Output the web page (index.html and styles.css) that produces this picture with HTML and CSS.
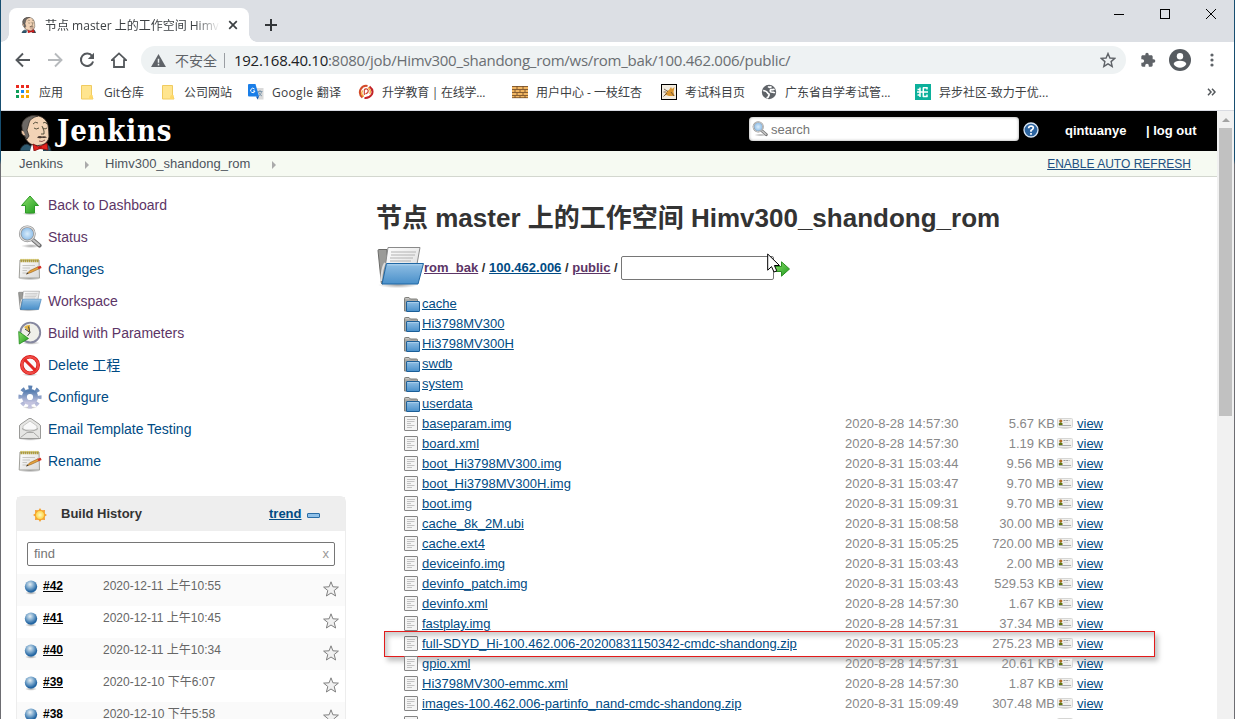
FILE: index.html
```html
<!DOCTYPE html>
<html lang="zh-CN">
<head>
<meta charset="utf-8">
<title>节点 master 上的工作空间 Himv300_shandong_rom</title>
<link rel="stylesheet" href="styles.css">
</head>
<body>
<svg class="defs" aria-hidden="true">
  <defs>
    <linearGradient id="gBlue" x1="0" y1="0" x2="0" y2="1"><stop offset="0" stop-color="#90bfe4"/><stop offset="1" stop-color="#4a90ca"/></linearGradient>
    <linearGradient id="gGreen" x1="0" y1="0" x2="1" y2="1"><stop offset="0" stop-color="#8ee06c"/><stop offset="1" stop-color="#1c9a1c"/></linearGradient>
    <linearGradient id="gPaper" x1="0" y1="0" x2="1" y2="1"><stop offset="0" stop-color="#fff"/><stop offset="1" stop-color="#d9d9d9"/></linearGradient>
    <linearGradient id="gGear" x1="0" y1="0" x2="0" y2="1"><stop offset="0" stop-color="#5a80b2"/><stop offset="1" stop-color="#c3c3df"/></linearGradient>
    <radialGradient id="gBall" cx=".42" cy=".32" r=".7"><stop offset="0" stop-color="#e4edf2"/><stop offset=".45" stop-color="#7aa7cc"/><stop offset=".85" stop-color="#1f62a0"/><stop offset="1" stop-color="#3d79ad"/></radialGradient>
    <radialGradient id="gLens"><stop offset="0" stop-color="#d9ecfb"/><stop offset="1" stop-color="#85b8e6"/></radialGradient>
    <radialGradient id="gSun"><stop offset="0" stop-color="#fffac0"/><stop offset="1" stop-color="#fbd13c"/></radialGradient>
    <radialGradient id="gShade"><stop offset="0" stop-color="#000" stop-opacity=".35"/><stop offset="1" stop-color="#000" stop-opacity="0"/></radialGradient>
    <symbol id="folder" viewBox="0 0 16 16"><path d="M.5 14V1.5Q.5.5 1.5.5H5L6.5 2H12.5Q13.5 2 13.5 3V14Z" fill="#a9a9a5" stroke="#80807c"/><path d="M1.5 1.7H5" stroke="#ccc"/><rect x="2.5" y="4.5" width="13" height="10" rx=".5" fill="url(#gBlue)" stroke="#1c5f98"/><path d="M3.5 5.5H14.5" fill="none" stroke="#a9cdea"/></symbol>
    <symbol id="file" viewBox="0 0 14 15"><rect x=".5" y=".5" width="13" height="14" rx=".5" fill="#f4f4f4" stroke="#848484"/><path d="M3 3.5H11M3 5.5H10.5M3 7.5H7M3 9.5H10.5M3 11.5H8" stroke="#c2c2c2"/></symbol>
    <symbol id="card" viewBox="0 0 16 12"><ellipse cx="8" cy="10.8" rx="7" ry="1.2" fill="url(#gShade)"/><rect x=".5" y="1.5" width="15" height="9" rx="1" fill="#f1f1ef" stroke="#d6d6d4"/><circle cx="3.8" cy="4" r="1.6" fill="#b06a25"/><path d="M1.8 8V6.5L3.5 5.2 5.5 6.3V8Z" fill="#5f7411"/><path d="M6.5 3.5H12.5" stroke="#999" stroke-dasharray="2 .7"/><path d="M6.5 5.5H11" stroke="#ddd"/><path d="M2 8.5H14" stroke="#aaa"/></symbol>
    <symbol id="ball" viewBox="0 0 16 16"><ellipse cx="8" cy="14" rx="6" ry="1.8" fill="url(#gShade)"/><circle cx="8" cy="7.6" r="6.2" fill="url(#gBall)"/></symbol>
    <symbol id="star" viewBox="0 0 16 16"><path d="M8 .8 9.9 5.8 15.4 6.1 11.2 9.5 12.6 15 8 12 3.4 15 4.8 9.5 .6 6.1 6.1 5.8Z" fill="#f1f1f1" stroke="#808080"/></symbol>
    <symbol id="note" viewBox="0 0 24 24"><ellipse cx="12" cy="21.5" rx="11" ry="2" fill="url(#gShade)"/><path d="M2 3H21L21.5 21H1.2Z" fill="url(#gPaper)" stroke="#a0a09b"/><path d="M2.5 4H21" stroke="#a8952e" stroke-width="2.6" stroke-dasharray="1.4 .6"/><path d="M2.5 2.4H21" stroke="#d7c456" stroke-width="1" stroke-dasharray="1.4 .6"/><path d="M4.5 8.5H17M4.5 11H12M4.5 13.5H9M4.5 16H10" stroke="#c6c6c3"/><path d="M8.5 17 12 13.6 20 9.8 21 11.8 13 15.5Z" fill="#e6a33d" stroke="#936020" stroke-width=".6"/><path d="M19.5 9.8 22.7 8.8 23.6 11 20.6 12.3Z" fill="#d33426"/><path d="M8 17.3 9.7 15.6 10.4 16.7Z" fill="#333"/></symbol>
    <symbol id="openfolder" viewBox="0 0 48 42"><ellipse cx="21" cy="39" rx="20" ry="3.2" fill="url(#gShade)"/><path d="M1 4.5 Q1 3.5 2 3.5H10V36L5 38Q4 37 4 34Z" fill="#9b9b98" stroke="#6b6b69"/><path d="M6 36 11 1.5H43L40 18 38 36Z" fill="url(#gPaper)" stroke="#8a8a8a"/><path d="M14 6H39M14 9H38M13 12H36M13 15H34" stroke="#b2b2b2"/><path d="M4 35Q5 22 8 17" fill="none" stroke="#ddd" stroke-width="2"/><path d="M9.5 17.5H46.5L41 38H5Z" fill="url(#gBlue)" stroke="#1f67a4"/><path d="M10.5 18.8H45" stroke="#b3d5ef"/></symbol>
    <symbol id="lens" viewBox="0 0 24 24"><ellipse cx="13" cy="21" rx="10" ry="2" fill="url(#gShade)"/><path d="M14.5 14.5 21.5 20.5" stroke="#707070" stroke-width="4.2" stroke-linecap="round"/><path d="M14.5 14.5 21 20" stroke="#c4c4c4" stroke-width="2.2" stroke-linecap="round"/><circle cx="9.3" cy="8.8" r="7.2" fill="url(#gLens)" stroke="#8c8c8c" stroke-width="2.4"/><circle cx="9.3" cy="8.8" r="7.2" fill="none" stroke="#e0e0e0" stroke-width="1.1"/></symbol>
    <symbol id="butler" viewBox="0 0 34 36"><path d="M1 36Q2 30 8 29L16 33 25 28Q31 29 32 36Z" fill="#2f5a70" stroke="#1d2d37"/><path d="M11 36 13 29 24 28V36Z" fill="#fff"/><path d="M5 19Q1 10 6 4 12-1 20 1 27 3 29 10 30 16 30 22 29 28 23 30 14 32 9 27 6 24 5 19Z" fill="#f2d3b6" stroke="#2b2521" stroke-width=".9"/><path d="M5 19Q0 9 6 4 12-1 19 1 11 3 10 8 9 12 8 15L10 21 8 24Q5 22 5 19Z" fill="#6c6865" stroke="#2b2521" stroke-width=".7"/><path d="M4.5 16Q1.5 14 2.5 18 3.5 21 6.5 21" fill="#e7c1a2" stroke="#2b2521" stroke-width=".7"/><path d="M14 9Q16 6 19 8M24 8Q26 6 28 9M15 13Q17 15 20 13M24 13Q26 15 28 13M23 11Q26 17 25 19L22 19" fill="none" stroke="#332" stroke-width=".8"/><path d="M18 22.5Q20 20.3 23 21.5 26 20.5 28 22.5 26 23.3 23 22.8 20 24 18 22.5Z" fill="#4a3a32"/><path d="M20 26Q23 27.5 26 25" fill="none" stroke="#733" stroke-width=".8"/><path d="M14 29 20 32 28 28 29 35 21 33.5 15 36Z" fill="#e2211c" stroke="#7b0b0b" stroke-width=".8"/><circle cx="21" cy="32.5" r="1.8" fill="#b80f0f"/></symbol>
  </defs>
</svg>

<div class="window">
  <header class="chrome">
    <div class="tabstrip">
      <div class="tab">
        <svg class="i16"><use href="#butler"/></svg>
        <span class="tab-title">节点 master 上的工作空间 Himv300</span>
        <svg class="tab-close" viewBox="0 0 10 10"><path d="M1.2 1.2 8.8 8.8M8.8 1.2 1.2 8.8" stroke="#3c4043" stroke-width="1.7"/></svg>
      </div>
      <svg class="tab-new" viewBox="0 0 12 12"><path d="M6 0V12M0 6H12" stroke="#333639" stroke-width="2"/></svg>
      <div class="wincontrols">
        <svg viewBox="0 0 12 12"><path d="M1 6.5H11" stroke="#000"/></svg>
        <svg viewBox="0 0 12 12"><rect x="1.5" y="1.5" width="9" height="9" fill="none" stroke="#000"/></svg>
        <svg viewBox="0 0 12 12"><path d="M1 1 11 11M11 1 1 11" stroke="#000"/></svg>
      </div>
    </div>
    <div class="toolbar">
      <svg class="nav" viewBox="0 0 16 16"><path d="M15 8H2M8 1.5 1.5 8 8 14.5" fill="none" stroke="#54585c" stroke-width="1.9"/></svg>
      <svg class="nav" viewBox="0 0 16 16"><path d="M1 8H14M8 1.5 14.5 8 8 14.5" fill="none" stroke="#b7babd" stroke-width="1.9"/></svg>
      <svg class="nav" viewBox="0 0 16 16"><path d="M13.2 4.2A6.2 6.2 0 1 0 14.1 9.5" fill="none" stroke="#54585c" stroke-width="2"/><path d="M15 .8V7H8.8Z" fill="#54585c"/></svg>
      <svg class="nav" viewBox="0 0 16 16"><path d="M.8 8.2 8 1.4 15.2 8.2H13V15H3V8.2Z" fill="none" stroke="#54585c" stroke-width="1.8"/></svg>
      <div class="omnibox">
        <svg class="warn" viewBox="0 0 16 14"><path d="M8 0 16 14H0Z" fill="#5f6368"/><path d="M8 5V9.5M8 10.5V12.3" stroke="#eef2f3" stroke-width="1.6"/></svg>
        <span class="insecure">不安全</span>
        <span class="url"><b>192.168.40.10</b>:8080/job/Himv300_shandong_rom/ws/rom_bak/100.462.006/public/</span>
        <svg class="bookmark-star" viewBox="0 0 16 16"><path d="M8 1.5 9.9 6 14.8 6.4 11.1 9.6 12.2 14.4 8 11.8 3.8 14.4 4.9 9.6 1.2 6.4 6.1 6Z" fill="none" stroke="#5f6368" stroke-width="1.4"/></svg>
      </div>
      <svg class="puzzle" viewBox="0 0 24 24"><path d="M20.5 11H19V7c0-1.1-.9-2-2-2h-4V3.5a2.5 2.5 0 0 0-5 0V5H4c-1.1 0-2 .9-2 2v3.8h1.5a2.7 2.7 0 0 1 0 5.4H2V20c0 1.1.9 2 2 2h3.8v-1.5a2.7 2.7 0 0 1 5.4 0V22H17c1.1 0 2-.9 2-2v-4h1.5a2.5 2.5 0 0 0 0-5z" fill="#5f6368"/></svg>
      <svg class="avatar" viewBox="0 0 22 22"><circle cx="11" cy="11" r="11" fill="#565b60"/><circle cx="11" cy="7.2" r="3.2" fill="#fff"/><path d="M4.6 15Q6 11.7 11 11.7T17.4 15Q15 18.8 11 18.8T4.6 15Z" fill="#fff"/></svg>
      <svg class="dots" viewBox="0 0 4 14"><circle cx="2" cy="2" r="1.6" fill="#5f6368"/><circle cx="2" cy="7" r="1.6" fill="#5f6368"/><circle cx="2" cy="12" r="1.6" fill="#5f6368"/></svg>
    </div>
    <nav class="bookmarks">
      <svg class="i16" viewBox="0 0 16 16"><path d="M1 1h3v3H1zM6 1h3v3H6zM11 1h3v3h-3z" fill="#ea2a1f"/><path d="M1 6h3v3H1z" fill="#0f9d58"/><path d="M6 6h3v3H6z" fill="#1a8cf0"/><path d="M11 6h3v3h-3zM6 11h3v3H6zM11 11h3v3h-3z" fill="#f5a800"/><path d="M1 11h3v3H1z" fill="#0f9d58"/></svg><span>应用</span>
      <svg class="i16" viewBox="0 0 16 16"><path d="M1.5 1.5H11.5V11L13 15H1.5Z" fill="#ffe58f" stroke="#f0cb60"/><path d="M9 15Q9 10 12.5 11V15Z" fill="#ffd968"/></svg><span>Git仓库</span>
      <svg class="i16" viewBox="0 0 16 16"><path d="M1.5 1.5H11.5V11L13 15H1.5Z" fill="#ffe58f" stroke="#f0cb60"/><path d="M9 15Q9 10 12.5 11V15Z" fill="#ffd968"/></svg><span>公司网站</span>
      <svg class="i16" viewBox="0 0 16 16"><path d="M7 4H15.5V15.5H9.5Z" fill="#dadada"/><path d="M9.5 7.5H14.5M12 6V7.5M13.5 8Q13 11 10 12.5M10.5 8Q11.5 11 14 12" stroke="#7893a8" fill="none" stroke-width=".9"/><path d="M1 0H7.5L11 12.5H1Q0 12.5 0 11.5V1Q0 0 1 0Z" fill="#1a7ee8"/><path d="M9.5 15.5 8 12.5H11Z" fill="#0b57b5"/><path d="M6.5 5A2.2 2.2 0 1 0 7 7H5" fill="none" stroke="#fff"/></svg><span class="lat">Google 翻译</span>
      <svg class="i16" viewBox="0 0 16 16"><path d="M4.5 13.5Q.5 10 2.5 5.5 5 1 9.5 2" fill="none" stroke="#d34a28" stroke-width="2"/><path d="M11.5 2.5Q16 6 13.8 10.5 11 14.5 6.5 14" fill="none" stroke="#c32227" stroke-width="2"/><path d="M6 12.5Q2.5 11 4.5 6.5M10 3.5Q13.5 6 11.8 10" fill="none" stroke="#f0a52d" stroke-width="1.2"/><path d="M6.3 11V6Q7 4.5 9 5 11 6 9.8 8.5L7.5 10" fill="none" stroke="#cf3e2a" stroke-width="1.1"/></svg><span class="sheng">升学教育 | 在线学...</span>
      <svg class="i16" viewBox="0 0 16 16"><path d="M0 2H16V14H0Z" fill="#f0b561"/><path d="M0 2.5H16M0 5.5H16M0 8.5H16M0 11.5H16M0 13.7H16M5 2V5M11 2V5M3 6V8M8 6V8M13 6V8M5 9V11M11 9V11M3 12V14M8 12V14M13 12V14" stroke="#6d4824" stroke-width=".8"/></svg><span>用户中心 - 一枝红杏</span>
      <svg class="i16" viewBox="0 0 16 16"><rect x=".5" y=".5" width="15" height="15" fill="#f2ece1" stroke="#000"/><path d="M6 7 8 6 10 3 11 5 13.5 3 12.5 8 13.5 12H8L5 11 3 12Z" fill="#d99530"/><path d="M2.5 12.5 6 9M3 5 7 7.5M2.5 8H5M10 8 13 12" stroke="#5a4a38" stroke-width=".8"/></svg><span>考试科目页</span>
      <svg class="i16" viewBox="0 0 16 16"><circle cx="8" cy="8" r="7.2" fill="#5f6368"/><path d="M2.2 6.5Q6 7 7 9.5 9 10 7.5 12.3 7 14 5.5 13.5M7 2.5Q8.5 4 10.5 2.5M13.5 5Q12 6 10 5.5 8.5 6.5 10 8 13 8 13.8 9" fill="none" stroke="#fff" stroke-width="1.7"/></svg><span>广东省自学考试管...</span>
      <svg class="i16" viewBox="0 0 16 16"><path d="M0 0H16V16H0Z" fill="#0cb09b"/><path d="M2 8H13M5 3.5V13M2.5 5.5H5M2.5 11H5M8 3.7H12.5M8 12.5H12.5M8.3 3.5V13M12 3V5.5M12 10.5V13" stroke="#fff" stroke-width="1.5" fill="none"/></svg><span>异步社区-致力于优...</span>
      <svg class="more" viewBox="0 0 9 8"><path d="M1 .8 4 4 1 7.2M5 .8 8 4 5 7.2" fill="none" stroke="#54585c" stroke-width="1.5"/></svg>
    </nav>
  </header>

  <div class="viewport">
    <div class="page">
      <div class="topbar">
        <svg class="butler"><use href="#butler"/></svg>
        <span class="brand">Jenkins</span>
        <div class="search"><svg class="i16"><use href="#lens"/></svg><span>search</span></div>
        <svg class="help" viewBox="0 0 16 16"><circle cx="8" cy="8" r="7" fill="#2c64a0" stroke="#d7e5f4" stroke-width="1.3"/><path d="M5.6 6.3Q5.8 4 8.1 4 10.4 4.2 10.3 6 10.2 7.2 8 8.5V9.8M8 11V12.8" fill="none" stroke="#fff" stroke-width="1.7"/></svg>
        <a class="user">qintuanye</a>
        <a class="logout">| log out</a>
      </div>
      <div class="crumbs">
        <span>Jenkins</span>
        <svg viewBox="0 0 4 8"><path d="M0 0 4 4 0 8Z" fill="#aaa"/></svg>
        <span>Himv300_shandong_rom</span>
        <svg viewBox="0 0 4 8"><path d="M0 0 4 4 0 8Z" fill="#aaa"/></svg>
        <a class="refresh">ENABLE AUTO REFRESH</a>
      </div>

      <div class="columns">
        <aside class="side">
          <ul class="tasks">
            <li class="seen"><svg viewBox="0 0 24 24"><ellipse cx="12" cy="20.5" rx="8" ry="1.8" fill="url(#gShade)"/><path d="M12 3 20.5 12.5H16.5V20H7.5V12.5H3.5Z" fill="url(#gGreen)" stroke="#2e9b26"/></svg>Back to Dashboard</li>
            <li class="seen"><svg><use href="#lens"/></svg>Status</li>
            <li><svg><use href="#note"/></svg>Changes</li>
            <li class="seen"><svg><use href="#openfolder"/></svg>Workspace</li>
            <li class="seen"><svg viewBox="0 0 24 24"><ellipse cx="13" cy="22" rx="9" ry="1.8" fill="url(#gShade)"/><circle cx="12.3" cy="11.5" r="9.9" fill="#efefe9" stroke="#85879f" stroke-width="1.9"/><path d="M12 11.5 6 6Q9 3.5 12 4Z" fill="#e2b546"/><path d="M12 11.5 10.5 5.5M12 11.5 7 8M12 11.5 9.5 15" stroke="#444" stroke-width="1"/><path d="M.7 10.5 10.5 17.5 1.3 23Z" fill="url(#gGreen)" stroke="#1f8d1a" stroke-width=".8"/></svg>Build with Parameters</li>
            <li><svg viewBox="0 0 24 24"><ellipse cx="12" cy="21.5" rx="8" ry="1.8" fill="url(#gShade)"/><circle cx="12" cy="12" r="8.2" fill="#fafafa" stroke="#d31212" stroke-width="3.6"/><circle cx="12" cy="12" r="8.2" fill="none" stroke="#f04a44" stroke-width="2.2"/><path d="M6.3 6.3 17.7 17.7" stroke="#e02723" stroke-width="3"/></svg>Delete 工程</li>
            <li><svg viewBox="0 0 24 24"><ellipse cx="12" cy="22.5" rx="7" ry="1.4" fill="url(#gShade)"/><circle cx="12" cy="12" r="9.4" fill="none" stroke="url(#gGear)" stroke-width="4.4" stroke-dasharray="3.7 3.68" stroke-dashoffset="1.85"/><circle cx="12" cy="12" r="5.6" fill="none" stroke="url(#gGear)" stroke-width="5"/></svg>Configure</li>
            <li><svg viewBox="0 0 24 24"><ellipse cx="12" cy="22" rx="11" ry="1.8" fill="url(#gShade)"/><path d="M1.5 9Q1.5 8 3 7L11 1.5H13L21 7Q22.5 8 22.5 9V21.5H1.5Z" fill="#e6e6e4" stroke="#9a9a98"/><path d="M5 9 12 4 19 9V13H5Z" fill="#f9f9f9" stroke="#c9c9c7"/><path d="M4 11.5Q12 17 20 11.5M2.5 20.5 9 15.5H15.5L21 20.5" fill="none" stroke="#a9a9a7"/></svg>Email Template Testing</li>
            <li><svg><use href="#note"/></svg>Rename</li>
          </ul>
          <section class="history">
            <div class="history-head">
              <svg class="i16" viewBox="0 0 16 16"><path d="M8 1 9.5 3.2 13 3 12.8 6.5 15 8 12.8 9.5 13 13 9.5 12.8 8 15 6.5 12.8 3 13 3.2 9.5 1 8 3.2 6.5 3 3 6.5 3.2Z" fill="#f5a334"/><circle cx="8" cy="8" r="4.6" fill="url(#gSun)" stroke="#f39a29" stroke-width=".7"/></svg>
              <b>Build History</b>
              <a>trend</a>
              <i class="collapse"></i>
            </div>
            <div class="find"><span>find</span><span class="clear">x</span></div>
            <div class="build"><svg class="ball"><use href="#ball"/></svg><a>#42</a><time>2020-12-11 上午10:55</time><svg class="fav"><use href="#star"/></svg></div>
            <div class="build"><svg class="ball"><use href="#ball"/></svg><a>#41</a><time>2020-12-11 上午10:45</time><svg class="fav"><use href="#star"/></svg></div>
            <div class="build"><svg class="ball"><use href="#ball"/></svg><a>#40</a><time>2020-12-11 上午10:34</time><svg class="fav"><use href="#star"/></svg></div>
            <div class="build"><svg class="ball"><use href="#ball"/></svg><a>#39</a><time>2020-12-10 下午6:07</time><svg class="fav"><use href="#star"/></svg></div>
            <div class="build"><svg class="ball"><use href="#ball"/></svg><a>#38</a><time>2020-12-10 下午5:58</time><svg class="fav"><use href="#star"/></svg></div>
          </section>
        </aside>

        <main class="main">
          <h1>节点 master 上的工作空间 Himv300_shandong_rom</h1>
          <div class="path">
            <svg class="bigfolder"><use href="#openfolder"/></svg>
            <span><a class="seen">rom_bak</a> / <a>100.462.006</a> / <a class="seen">public</a> /</span>
            <div class="pattern"></div>
            <svg class="go" viewBox="0 0 16 16"><path d="M.5 5.5H7.5V.8L15.5 8 7.5 15.2V10.5H.5Z" fill="url(#gGreen)" stroke="#2d9024"/></svg>
            <svg class="cursor" viewBox="0 0 14 20"><path d="M.7 1V17.2L4.5 13.6 7 19 9.8 17.8 7.4 12.5H12.5Z" fill="#fff" stroke="#000"/></svg>
          </div>
          <div class="files">
            <div class="row"><svg><use href="#folder"/></svg><a>cache</a></div>
            <div class="row"><svg><use href="#folder"/></svg><a>Hi3798MV300</a></div>
            <div class="row"><svg><use href="#folder"/></svg><a>Hi3798MV300H</a></div>
            <div class="row"><svg><use href="#folder"/></svg><a>swdb</a></div>
            <div class="row"><svg><use href="#folder"/></svg><a>system</a></div>
            <div class="row"><svg><use href="#folder"/></svg><a>userdata</a></div>
            <div class="row file"><svg><use href="#file"/></svg><a>baseparam.img</a><time>2020-8-28 14:57:30</time><span>5.67 KB</span><svg><use href="#card"/></svg><a>view</a></div>
            <div class="row file"><svg><use href="#file"/></svg><a>board.xml</a><time>2020-8-28 14:57:30</time><span>1.19 KB</span><svg><use href="#card"/></svg><a>view</a></div>
            <div class="row file"><svg><use href="#file"/></svg><a>boot_Hi3798MV300.img</a><time>2020-8-31 15:03:44</time><span>9.56 MB</span><svg><use href="#card"/></svg><a>view</a></div>
            <div class="row file"><svg><use href="#file"/></svg><a>boot_Hi3798MV300H.img</a><time>2020-8-31 15:03:47</time><span>9.70 MB</span><svg><use href="#card"/></svg><a>view</a></div>
            <div class="row file"><svg><use href="#file"/></svg><a>boot.img</a><time>2020-8-31 15:09:31</time><span>9.70 MB</span><svg><use href="#card"/></svg><a>view</a></div>
            <div class="row file"><svg><use href="#file"/></svg><a>cache_8k_2M.ubi</a><time>2020-8-31 15:08:58</time><span>30.00 MB</span><svg><use href="#card"/></svg><a>view</a></div>
            <div class="row file"><svg><use href="#file"/></svg><a>cache.ext4</a><time>2020-8-31 15:05:25</time><span>720.00 MB</span><svg><use href="#card"/></svg><a>view</a></div>
            <div class="row file"><svg><use href="#file"/></svg><a>deviceinfo.img</a><time>2020-8-31 15:03:43</time><span>2.00 MB</span><svg><use href="#card"/></svg><a>view</a></div>
            <div class="row file"><svg><use href="#file"/></svg><a>devinfo_patch.img</a><time>2020-8-31 15:03:43</time><span>529.53 KB</span><svg><use href="#card"/></svg><a>view</a></div>
            <div class="row file"><svg><use href="#file"/></svg><a>devinfo.xml</a><time>2020-8-28 14:57:30</time><span>1.67 KB</span><svg><use href="#card"/></svg><a>view</a></div>
            <div class="row file"><svg><use href="#file"/></svg><a>fastplay.img</a><time>2020-8-28 14:57:31</time><span>37.34 MB</span><svg><use href="#card"/></svg><a>view</a></div>
            <div class="row file marked"><svg><use href="#file"/></svg><a>full-SDYD_Hi-100.462.006-20200831150342-cmdc-shandong.zip</a><time>2020-8-31 15:05:23</time><span>275.23 MB</span><svg><use href="#card"/></svg><a>view</a></div>
            <div class="row file"><svg><use href="#file"/></svg><a>gpio.xml</a><time>2020-8-28 14:57:31</time><span>20.61 KB</span><svg><use href="#card"/></svg><a>view</a></div>
            <div class="row file"><svg><use href="#file"/></svg><a>Hi3798MV300-emmc.xml</a><time>2020-8-28 14:57:30</time><span>1.87 KB</span><svg><use href="#card"/></svg><a>view</a></div>
            <div class="row file"><svg><use href="#file"/></svg><a>images-100.462.006-partinfo_nand-cmdc-shandong.zip</a><time>2020-8-31 15:09:49</time><span>307.48 MB</span><svg><use href="#card"/></svg><a>view</a></div>
            <div class="row file"><svg><use href="#file"/></svg><a>images-100.462.006-partinfo-cmdc-shandong.zip</a><time>2020-8-31 15:08:55</time><span>202.64 MB</span><svg><use href="#card"/></svg><a>view</a></div>
          </div>
        </main>
      </div>
    </div>
    <div class="scrollbar">
      <svg viewBox="0 0 8 4"><path d="M4 0 8 4H0Z" fill="#a3a3a3"/></svg>
      <div class="thumb"></div>
    </div>
  </div>
</div>
</body>
</html>
```
FILE: styles.css
```css
*, *::before, *::after { box-sizing: border-box; }

body {
  margin: 0;
  width: 1235px;
  height: 719px;
  overflow: hidden;
  font: 13px/20px "Liberation Sans", "Noto Sans CJK SC", sans-serif;
  color: #333;
}

svg { display: block; flex: none; }
.defs { position: absolute; width: 0; height: 0; }
.i16 { width: 16px; height: 16px; }

.window {
  height: 719px;
  display: flex;
  flex-direction: column;
  border-left: 1px solid #6d6d72;
  border-right: 1px solid #707478;
  border-image: linear-gradient(#174e70 160px, #6d6d72 165px) 1;
  border-top: 0;
  border-bottom: 0;
}

/* browser chrome */
.chrome {
  flex: none;
  height: 111px;
  background: #fff;
  border-bottom: 1px solid #d9dbe2;
  font-family: "Open Sans", "Noto Sans CJK SC", sans-serif;
}
.tabstrip {
  height: 42px;
  display: flex;
  align-items: flex-start;
  background: #dcdfe4;
  padding: 8px 0 0 8px;
}
.tab {
  width: 240px;
  height: 34px;
  display: flex;
  align-items: center;
  padding-left: 12px;
  border-radius: 8px 8px 0 0;
  background: #fff;
  position: relative;
}
.tab::before, .tab::after {
  content: "";
  position: absolute;
  bottom: 0;
  width: 8px;
  height: 8px;
}
.tab::before { left: -8px; background: radial-gradient(circle at 0 0, transparent 7.5px, #fff 8px); }
.tab::after { right: -8px; background: radial-gradient(circle at 100% 0, transparent 7.5px, #fff 8px); }
.tab-title {
  width: 175px;
  margin-left: 8px;
  padding-top: 1px;
  overflow: hidden;
  white-space: nowrap;
  font-size: 12px;
  color: #3c4043;
  -webkit-mask-image: linear-gradient(90deg, #000 150px, transparent 175px);
  mask-image: linear-gradient(90deg, #000 150px, transparent 175px);
}
.tab-close { width: 10px; height: 10px; margin-left: 8px; }
.tab-new { width: 12px; height: 12px; margin: 11px 0 0 16px; }
.wincontrols { margin-left: auto; display: flex; gap: 34px; padding-right: 17px; }
.wincontrols svg { width: 12px; height: 12px; }

.toolbar { height: 36px; display: flex; align-items: center; padding-left: 14px; }
.nav { width: 16px; height: 16px; margin-right: 16px; }
.omnibox {
  width: 985px;
  height: 28px;
  margin-left: -2px;
  padding: 0 10px;
  display: flex;
  align-items: center;
  border-radius: 14px;
  background: #eef2f3;
}
.warn { width: 15px; height: 13px; }
.insecure {
  margin-left: 9px;
  width: 50px;
  font-size: 14px;
  color: #5f6368;
  border-right: 1px solid #9a9ea3;
  line-height: 15px;
}
.url { margin-left: 9px; font-size: 15px; letter-spacing: -.28px; color: #6a6e72; white-space: nowrap; }
.url b { font-weight: 400; color: #202124; }
.bookmark-star { width: 16px; height: 16px; margin-left: auto; }
.puzzle { width: 16px; height: 16px; margin-left: 14px; }
.avatar { width: 22px; height: 22px; margin-left: 13px; }
.dots { width: 4px; height: 14px; margin-left: 19px; }

.bookmarks {
  height: 28px;
  display: grid;
  grid-template-columns: 24px 41px 24px 57px 23px 64px 24px 86px 24px 130px 24px 125px 24px 76px 24px 130px 24px 268px 9px;
  align-items: center;
  padding-left: 14px;
  font-size: 12px;
  color: #3c4043;
  white-space: nowrap;
}
.bookmarks span { padding-top: 2px; }
.bookmarks .lat { letter-spacing: .3px; }
.bookmarks .sheng { letter-spacing: -.25px; }
.bookmarks .more { width: 9px; height: 8px; }

/* page */
.viewport { flex: 1; min-height: 0; display: flex; background: #fff; }
.page { width: 1216px; overflow: hidden; }
.scrollbar {
  flex: 1;
  background: #f1f1f1;
  display: flex;
  flex-direction: column;
  align-items: center;
  padding-top: 7px;
}
.scrollbar svg { width: 8px; height: 4px; }
.thumb { width: 13px; height: 288px; margin-top: 6px; background: #c1c1c1; }

.topbar {
  height: 40px;
  background: #000;
  display: flex;
  align-items: center;
  color: #fff;
  font-weight: bold;
}
.butler { width: 34px; height: 36px; margin: 4px 0 0 18px; }
.brand {
  width: 692px;
  margin-left: 4px;
  font: bold 29px/38px "DejaVu Serif Condensed", "DejaVu Serif", serif;
  font-stretch: condensed;
  letter-spacing: .8px;
}
.search {
  width: 270px;
  height: 24px;
  margin-top: -4px;
  display: flex;
  align-items: center;
  gap: 3px;
  padding-left: 3px;
  border-radius: 4px;
  background: #fff;
  box-shadow: inset 0 0 3px #999;
  color: #757575;
  font-weight: 400;
}
.search span { padding-top: 1px; }
.help { width: 16px; height: 16px; margin: -2px 0 0 4px; }
.user { margin-left: 26px; width: 81px; }

.crumbs {
  height: 26px;
  display: flex;
  align-items: center;
  padding: 0 26px 0 18px;
  background: #f6faf2;
  border-bottom: 1px solid #d3d7cf;
  color: #4d545d;
}
.crumbs span { line-height: 25px; }
.crumbs svg { width: 4px; height: 8px; margin: 2px 16px 0 22px; }
.crumbs .refresh { margin-left: auto; font-size: 12px; color: #205081; text-decoration: underline; }

.columns { display: flex; height: 542px; overflow: hidden; }
.side { width: 345px; padding: 12px 0 0 15px; }
.tasks {
  list-style: none;
  margin: 0;
  padding: 0;
  font-size: 14px;
}
.tasks li {
  height: 32px;
  display: flex;
  align-items: center;
  gap: 6px;
  padding-left: 2px;
  color: #004b84;
}
.tasks svg { width: 24px; height: 24px; }
.tasks .seen, .path .seen { color: #5c3566; }

.history { margin-top: 19px; border: 1px solid #ededed; border-radius: 6px 6px 0 0; }
.history-head {
  height: 34px;
  display: flex;
  align-items: center;
  padding-left: 15px;
  background: #eee;
}
.history-head .i16 { margin-top: 1px; }
.history-head b { margin-left: 13px; width: 208px; }
.history-head a { font-weight: bold; color: #004b84; text-decoration: underline; }
.collapse {
  width: 13px;
  height: 5px;
  margin: 3px 0 0 5px;
  border: 1px solid #2a6ca5;
  border-radius: 1px;
  background: #8fc0e8;
}
.find {
  height: 24px;
  margin: 11px 10px 8px;
  padding: 0 5px 0 6px;
  display: flex;
  justify-content: space-between;
  align-items: center;
  border: 1px solid #767676;
  border-radius: 2px;
  color: #757575;
}
.find .clear { color: #999; }
.build {
  height: 32px;
  display: flex;
  align-items: flex-start;
  padding: 2px 6px 0 6px;
  font-size: 12px;
}
.build:nth-of-type(odd) { background: #fafafa; }
.ball { width: 16px; height: 16px; margin-top: 3px; }
.build a { width: 60px; margin-left: 4px; font-weight: bold; color: #000; text-decoration: underline; }
.build time { color: #666; }
.fav { width: 16px; height: 16px; margin: 5px 0 0 auto; }

.main { flex: 1; padding: 23px 0 0 30px; }
h1 { margin: 0; font-size: 26px; line-height: 36px; }
.path {
  height: 44px;
  margin-top: 10px;
  display: flex;
  align-items: center;
  position: relative;
  font-weight: bold;
}
.path a { color: #004b84; text-decoration: underline; }
.bigfolder { width: 48px; height: 42px; margin: -2px 0 0 1px; }
.path span { width: 197px; margin-left: -1px; white-space: nowrap; }
.pattern { width: 153px; height: 24px; border: 1px solid #767676; border-radius: 2px; }
.go { width: 16px; height: 16px; margin-top: 2px; }
.cursor { position: absolute; left: 391px; top: 7px; width: 14px; height: 20px; }

.files { padding: 4px 0 0 28px; }
.row {
  height: 20px;
  display: grid;
  grid-template-columns: 18px 423px 116px 94px 22px auto;
  align-items: center;
  position: relative;
  color: #888;
}
.row a { color: #004b84; text-decoration: underline; white-space: nowrap; }
.row svg { width: 16px; height: 16px; margin-top: 2px; }
.file svg:first-child { width: 14px; height: 15px; margin-top: -1px; }
.file svg:nth-of-type(2) { width: 16px; height: 12px; margin: -2px 0 0 2px; }
.row span { text-align: right; }

/* callout frame around one entry */
.marked::after {
  content: "";
  position: absolute;
  left: -20px;
  top: -3px;
  width: 771px;
  height: 26px;
  border: 1px solid #e31b1b;
  box-shadow: 3px 4px 5px rgba(0, 0, 0, .25), inset 3px 4px 5px rgba(0, 0, 0, .2);
}
```
